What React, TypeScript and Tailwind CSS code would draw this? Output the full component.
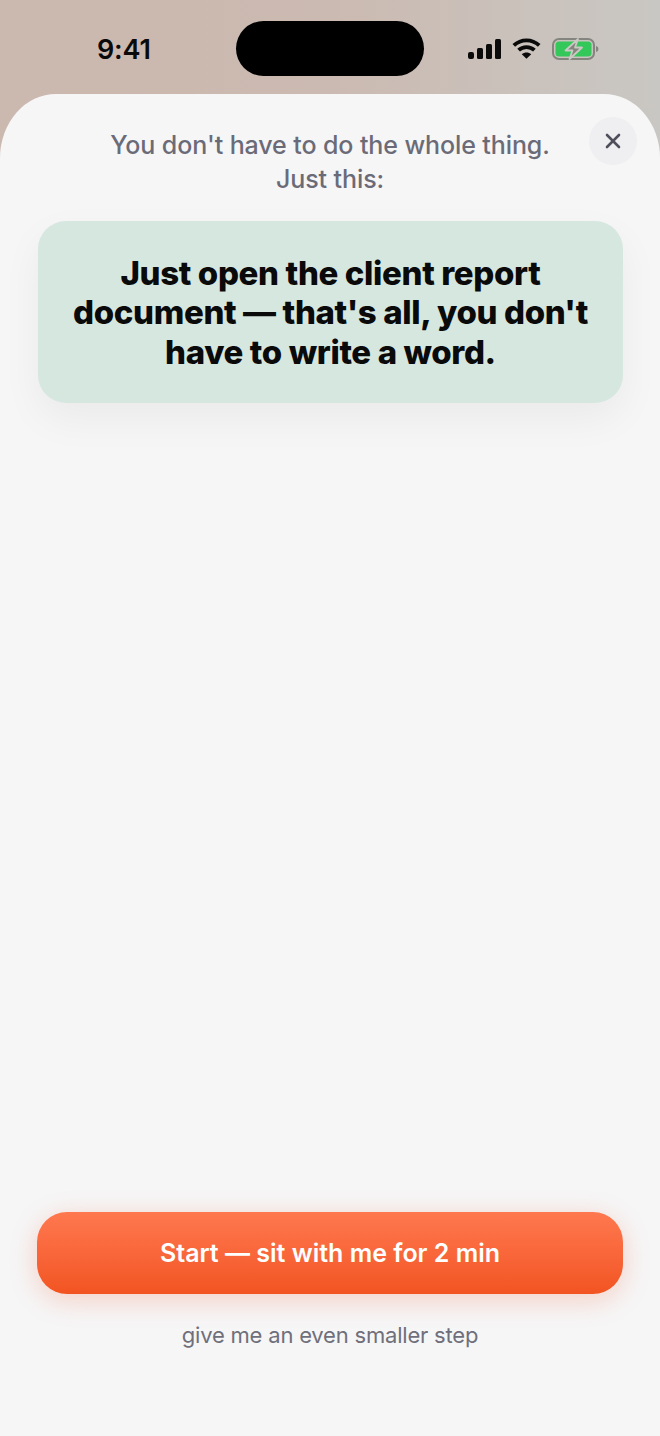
import React from 'react';
import { X } from 'lucide-react';

const StatusIcons = () => (
  <div className="flex items-center gap-[11px]">
    {/* signal */}
    <svg width="33" height="20" viewBox="0 0 33 20" fill="#0a0a0a">
      <rect x="0" y="13" width="6" height="7" rx="2" />
      <rect x="9" y="9" width="6" height="11" rx="1.500" />
      <rect x="18" y="5" width="6" height="15" rx="1.500" />
      <rect x="27" y="0" width="6" height="20" rx="1.500" />
    </svg>
    {/* wifi */}
    <svg width="29" height="21" viewBox="0 0 29 21" fill="none" stroke="#0a0a0a" strokeWidth="3.800">
      <path d="M1.800 7.400C9 .6 20 .6 27.200 7.400" />
      <path d="M6.600 12.200C11 8 18 8 22.400 12.200" />
      <path d="M14.500 20.800 9.800 16.200C12.400 14 16.600 14 19.200 16.200Z" fill="#0a0a0a" stroke="none" />
    </svg>
    {/* battery */}
    <svg width="47" height="22" viewBox="0 0 47 22" fill="none">
      <rect x="1" y="1" width="41" height="20" rx="6" stroke="#85857f" strokeWidth="2" />
      <rect x="3.500" y="3.500" width="36" height="15" rx="3.500" fill="#34c759" />
      <path d="M44 8c1.600.4 2.400 1.500 2.400 3s-.8 2.600-2.400 3Z" fill="#85857f" />
      <path d="M26 1 13.500 12.500h7L17.500 21 30 9.500h-7Z" fill="#85857f" stroke="#cac9c4" strokeWidth="1.800" strokeLinejoin="round" />
    </svg>
  </div>
);

export default function App() {
  return (
    <div
      className="w-[660px] h-[1436px] flex flex-col overflow-hidden bg-gradient-to-r from-[#cbb8af] via-[#cbbab1] to-[#c9c7c3]"
      style={{ fontFamily: 'Inter, sans-serif' }}
    >
      {/* Status bar */}
      <div className="h-[94px] shrink-0 flex items-start pt-[21px]">
        <div className="w-[236px] h-[55px] flex items-center pl-[97px] pt-[1px]">
          <span className="text-[27px] leading-none font-semibold tracking-[-0.2px] text-[#0a0a0a]">9:41</span>
        </div>
        <div className="w-[188px] h-[55px] rounded-full bg-black" />
        <div className="flex-1 h-[55px] flex items-center pl-[44px]">
          <StatusIcons />
        </div>
      </div>

      {/* Sheet */}
      <div className="relative flex-1 flex flex-col bg-[#f6f6f7] rounded-tl-[56px_64px] rounded-tr-[56px_64px] px-[37px]">
        <button className="absolute top-[23px] right-[23px] w-[48px] h-[48px] rounded-full bg-[#efeff1] flex items-center justify-center">
          <X size={24} strokeWidth={2.6} className="text-[#50505c]" />
        </button>

        <p className="pt-[34px] text-center text-[25px] leading-[34px] font-medium tracking-[-0.1px] text-[#6b6b78]">
          You don't have to do the whole thing.
          <br />
          Just this:
        </p>

        <div className="mt-[25px] ml-[1px] h-[182px] rounded-[28px] bg-[#d6e7e0] shadow-[0_16px_40px_rgba(0,0,0,0.05)] flex items-center justify-center px-[30px] pt-[2px]">
          <h1 className="text-center text-[33px] leading-[39.500px] font-extrabold tracking-[-0.36px] text-[#0a0a0a]">
            Just open the client report document — that's all, you don't have to write a word.
          </h1>
        </div>

        <div className="flex-1" />

        <button className="h-[82px] pt-[1px] rounded-[30px] bg-gradient-to-b from-[#ff784f] to-[#f25420] shadow-[0_6px_28px_rgba(242,84,32,0.24)] text-white text-[25px] font-semibold">
          Start — sit with me for 2 min
        </button>

        <button className="mt-[27px] mb-[87px] text-center text-[22px] leading-[28px] tracking-[-0.2px] text-[#6f6f7b]">
          give me an even smaller step
        </button>
      </div>
    </div>
  );
}
